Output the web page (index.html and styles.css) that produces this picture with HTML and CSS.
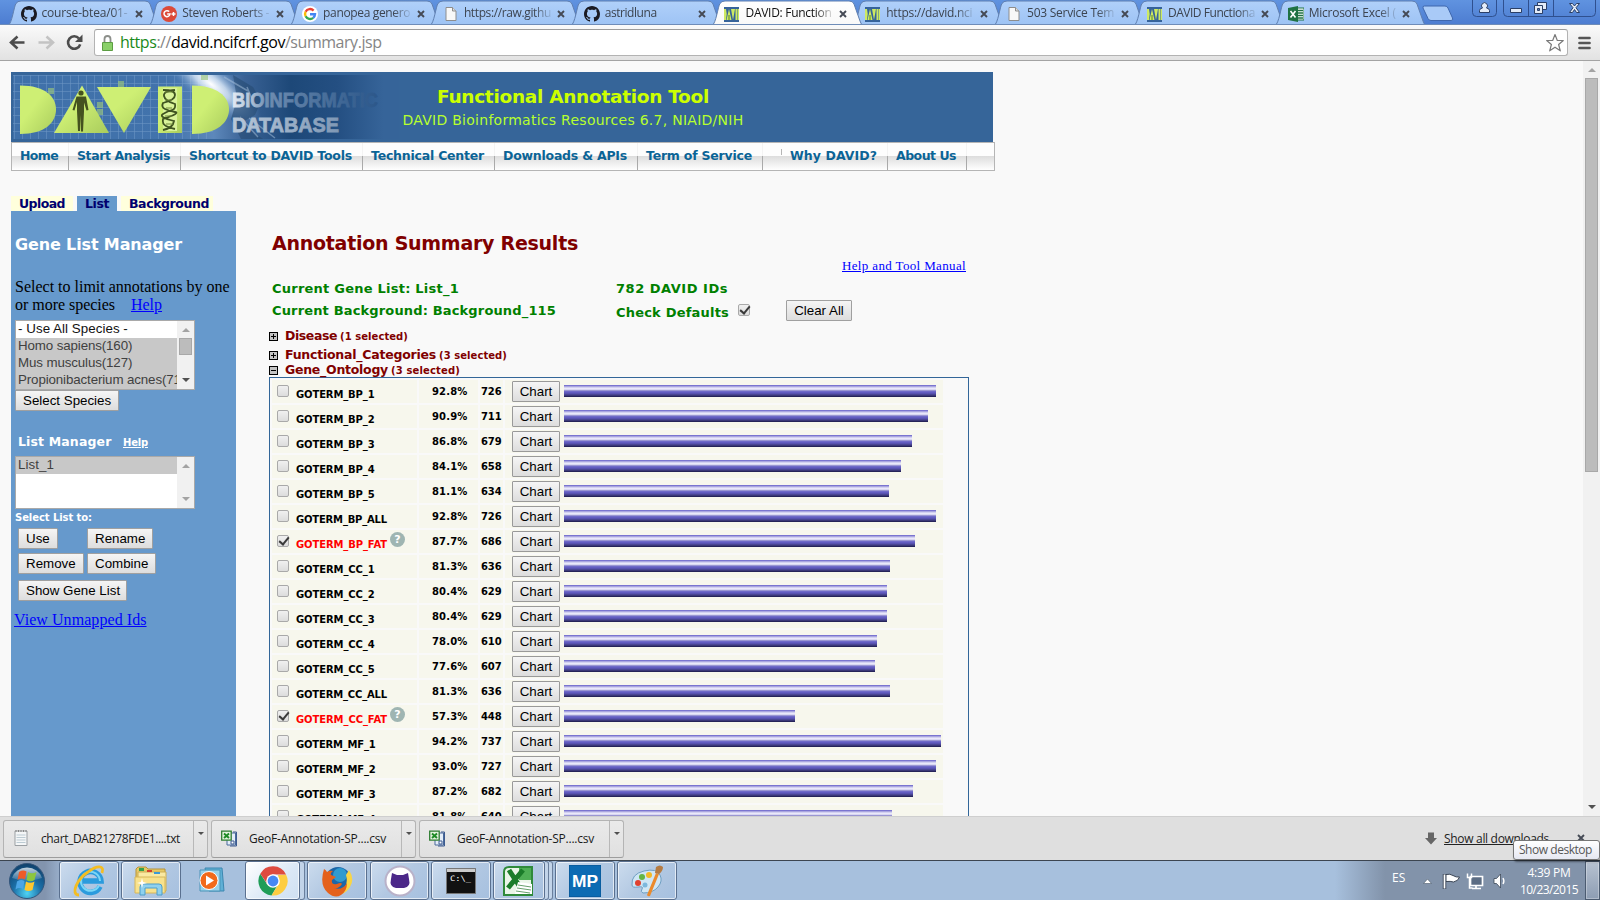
FILE: index.html
```html
<!DOCTYPE html>
<html lang="en">
<head>
<meta charset="utf-8">
<title>DAVID: Functional Annotation Tool</title>
<link rel="stylesheet" href="styles.css">
</head>
<body>
<svg width="0" height="0" class="defs">
  <defs>
    <linearGradient id="tabFill" x1="0" y1="0" x2="0" y2="1"><stop offset="0" stop-color="#b0d0fa"/><stop offset="1" stop-color="#9dc3f4"/></linearGradient>
    <linearGradient id="tabOn" x1="0" y1="0" x2="0" y2="1"><stop offset="0" stop-color="#fff"/><stop offset="1" stop-color="#f8f8f8"/></linearGradient>
    <linearGradient id="limeD" x1="0" y1="0" x2="1" y2="1"><stop offset=".4" stop-color="#ceef74"/><stop offset="1" stop-color="#a9cc5c"/></linearGradient>
    <symbol id="i-github" viewBox="0 0 16 16"><path fill="#1a1a22" d="M8 0C3.58 0 0 3.58 0 8c0 3.54 2.29 6.53 5.47 7.59.4.07.55-.17.55-.38 0-.19-.01-.82-.01-1.49-2.01.37-2.53-.49-2.69-.94-.09-.23-.48-.94-.82-1.13-.28-.15-.68-.52-.01-.53.63-.01 1.08.58 1.23.82.72 1.21 1.87.87 2.33.66.07-.52.28-.87.51-1.07-1.78-.2-3.64-.89-3.64-3.95 0-.87.31-1.59.82-2.15-.08-.2-.36-1.02.08-2.12 0 0 .67-.21 2.2.82.64-.18 1.32-.27 2-.27s1.36.09 2 .27c1.53-1.04 2.2-.82 2.2-.82.44 1.1.16 1.92.08 2.12.51.56.82 1.27.82 2.15 0 3.07-1.87 3.75-3.65 3.95.29.25.54.73.54 1.48 0 1.07-.01 1.93-.01 2.2 0 .21.15.46.55.38A8.01 8.01 0 0 0 16 8c0-4.42-3.58-8-8-8z"/></symbol>
    <symbol id="i-gplus" viewBox="0 0 16 16"><circle cx="8" cy="8" r="8" fill="#db4a39"/><path d="M8.2 5.6A3 3 0 1 0 9 8H6.2M10.5 8h4M12.5 6v4" fill="none" stroke="#fff" stroke-width="1.5"/></symbol>
    <symbol id="i-google" viewBox="0 0 16 16"><circle cx="8" cy="8" r="8" fill="#fff"/><g fill="none" stroke-width="2.4"><path d="M11.6 4.6A5 5 0 0 0 3.6 5.7" stroke="#ea4335"/><path d="M3.6 5.7a5 5 0 0 0 0 4.6" stroke="#fbbc05"/><path d="M3.6 10.3a5 5 0 0 0 7.6 1.5" stroke="#34a853"/><path d="M11.2 11.8A5 5 0 0 0 13 8.2H8" stroke="#4285f4"/></g></symbol>
    <symbol id="i-page" viewBox="0 0 16 16"><path d="M3 1.5h6.5L13 5v9.5H3z" fill="#f8f8f8" stroke="#8d8d8d"/><path d="M9.5 1.5V5H13" fill="#ddd" stroke="#8d8d8d"/></symbol>
    <symbol id="i-david" viewBox="0 0 16 16"><rect y="1" width="15" height="15" fill="#36639a"/><path d="M0 3h2q1.500 5 0 11H0zM2.500 14L5 3l2.500 11zM7 3h4L9 14z" fill="#cdea62"/><path d="M11.500 3H13v11h-1.500zM13.500 3H15v11h-1.500z" fill="#cdea62"/><path d="M4.500 9h1v5h-1z" fill="#55802f"/></symbol>
    <symbol id="i-xl" viewBox="0 0 16 16"><path d="M9 2h7v12H9z" fill="#fff" stroke="#1f7244"/><path d="M10 4.500h5M10 7h5M10 9.500h5M10 12h5" stroke="#1f7244" stroke-width="1.300"/><path d="M0 2l10-2v16L0 14z" fill="#1f7244"/><path d="M2.500 5l5 6.500M7.500 5l-5 6.500" stroke="#fff" stroke-width="1.600"/></symbol>
    <symbol id="i-csv" viewBox="0 0 16 16"><path d="M6 2.500h8.500v12H6z" fill="#e4edf8" stroke="#4a6a9c"/><path d="M12 1.500h3.500v14H9" fill="none" stroke="#3c5b90"/><path d="M.7.700h9.500v9H.7z" fill="#e4f3df" stroke="#2f7d32" stroke-width="1.300"/><path d="M3 3l5 4.500M8 3L3 7.500" stroke="#1d8b25" stroke-width="1.900"/><path d="M10 10.500h3v3h-3z" fill="#fff" stroke="#3c5b90"/></symbol>
    <symbol id="i-note" viewBox="0 0 14 18"><path d="M1 2h12v14.500H1z" fill="#f4f6f7" stroke="#9a9fa3"/><path d="M2 1v2M4.500 1v2M7 1v2M9.500 1v2M12 1v2" stroke="#888"/><path d="M2.500 6h9M2.500 8.500h9M2.500 11h9M2.500 13.500h9" stroke="#bccbd3"/></symbol>
    <symbol id="i-x" viewBox="0 0 8 8"><path d="M1 1l6 6M7 1L1 7" stroke="#454a55" stroke-width="1.900"/></symbol>
  </defs>
</svg>

<div class="strip">
  <div class="tabs" id="tabs"></div>
  <svg class="newtab" width="32" height="17" viewBox="0 0 32 17"><path d="M2.500 1H23q2 0 3 2l4.500 10q1 2.500-1.500 2.500H9q-2 0-3-2L1 3Q.3 1 2.500 1z" fill="#a9caf7" stroke="#3f67ad"/></svg>
  <svg class="winbtns" width="128" height="20" viewBox="0 0 128 20"><g fill="none" stroke="#2f508f"><path d="M3.500 0v12.500q0 4 4 4h16q4 0 4-4V0"/><path d="M34.500 0v12.500q0 4 4 4h84q4 0 4-4V0M59.500 0v16.500M84.500 0v16.500"/></g><g fill="#e4ecf8" stroke="#2b3f66"><path d="M10.500 12.500v-2q0-2 3-2.500a3 3 0 1 1 4 0q3 .5 3 2.500v2z"/><path d="M41.500 8.500h11v4h-11z"/><path d="M68.500 2.500h9v7h-9z"/><path d="M65.500 5.500h8v8h-8z"/><path d="M68.500 8.500h2v2h-2z" fill="#5b7fc4"/><path d="M100.500 3.500h3l2 2.500 2-2.500h3l-3.500 4.200 3.500 4.800h-3l-2-3-2 3h-3l3.500-4.800z"/></g></svg>
</div>

<div class="toolbar">
  <svg class="nav" width="84" height="36" viewBox="0 0 84 36"><g fill="none" stroke-width="2.600"><path d="M25 18.500H12M18 12.500L11.500 18.500l6.500 6" stroke="#4c4c4c"/><path d="M39 18.500h14M47 12.500l6.500 6-6.500 6" stroke="#c3c3c3"/><path d="M79.500 14.500a6.200 6.200 0 1 0 1.200 5.800" stroke="#4c4c4c"/></g><path d="M83 10.500v7.500h-7.500z" fill="#4c4c4c"/></svg>
  <div class="omnibox">
    <svg class="lock" width="13" height="18" viewBox="0 0 13 18"><path d="M3.500 9V5a3 3 0 0 1 6 0v4" fill="none" stroke="#8c8f8a" stroke-width="1.800"/><path d="M1.500 8.500h10v8h-10z" fill="#8ad069" stroke="#5c9d43"/></svg>
    <span class="url"><span data-w="261.500"><b class="sec">https</b>://<b>david.ncifcrf.gov</b>/summary.jsp</span></span>
    <svg class="star" width="20" height="20" viewBox="0 0 20 20"><path d="M10 1.500l2.300 6h6l-4.700 4 1.700 6.300-5.300-3.600-5.300 3.600 1.700-6.300-4.700-4h6z" fill="#fff" stroke="#7a7a7a" stroke-width="1.200" stroke-linejoin="round"/></svg>
  </div>
  <svg class="burger" width="13" height="14" viewBox="0 0 13 14"><path d="M1.500 2h10M1.500 7h10M1.500 12h10" stroke="#555" stroke-width="2.700" stroke-linecap="round"/></svg>
</div>

<div class="view">
  <div class="page">
    <div class="banner">
      <svg class="logo" width="391" height="70" viewBox="0 0 391 70">
        <defs>
          <linearGradient id="bg1" x1="0" x2="1"><stop offset="0" stop-color="#3f70a9"/><stop offset=".4" stop-color="#4273ac"/><stop offset=".52" stop-color="#5d88bb"/><stop offset=".6" stop-color="#3a6295"/><stop offset=".72" stop-color="#1d4878"/><stop offset=".84" stop-color="#244f82"/><stop offset=".96" stop-color="#366499"/></linearGradient>
          <radialGradient id="glow"><stop offset="0" stop-color="#fff"/><stop offset=".35" stop-color="#dbe9f8" stop-opacity=".8"/><stop offset="1" stop-color="#6a97cb" stop-opacity="0"/></radialGradient>
          <linearGradient id="fade" x1="0" x2="1"><stop offset="0" stop-color="#e5ecf4"/><stop offset=".14" stop-color="#a9bdd4"/><stop offset=".24" stop-color="#6f8db1"/><stop offset=".6" stop-color="#4c719c"/><stop offset="1" stop-color="#2c578a"/></linearGradient>
          <linearGradient id="fade2" x1="0" x2="1"><stop offset="0" stop-color="#b9c9da"/><stop offset="1" stop-color="#8098b5"/></linearGradient>
          <pattern id="grid" width="8" height="8" patternUnits="userSpaceOnUse"><path d="M0 3.500h8M3.500 0v8" stroke="#7fa5cf" stroke-opacity=".55"/></pattern>
          <clipPath id="pic"><rect x="2" y="3" width="386" height="64"/></clipPath>
        </defs>
        <g clip-path="url(#pic)">
        <rect x="2" y="3" width="386" height="65" fill="url(#bg1)"/>
        <rect x="2" y="3" width="200" height="65" fill="url(#grid)" opacity=".7"/>
        <ellipse cx="200" cy="12" rx="62" ry="20" transform="rotate(38 200 12)" fill="url(#glow)"/>
        <path d="M222 3l20 12 8 14-6 14-14 8 22 16h-22l-10-20 6-20z" fill="#25486f" opacity=".55"/>
        <path d="M213 5l24 14M236 15l5 12M229 45l18 20M238 46l26 20" stroke="#a9c3de" stroke-width="1.500" opacity=".5"/>
        </g>
        <g fill="#9bc67d" opacity=".65"><rect x="37" y="16" width="6" height="6"/><rect x="107" y="9" width="6" height="6"/><rect x="86" y="30" width="6" height="6"/><rect x="86" y="37" width="6" height="6"/><rect x="190" y="3" width="7" height="5"/></g>
        <g fill="url(#limeD)"><path d="M9 13.500c25 0 36 11 36 24S34 62 9 62z"/><path d="M71 13.500L98 61H43z"/><path d="M86 15h54l-27 46z"/><path d="M147 14.500h24V61h-24z"/><path d="M181 13.500c25 0 37 11 37 24S206 62 181 62z"/></g>
        <path d="M152 16h14v43h-14z" fill="#d9f39a"/>
        <g fill="#45521f"><circle cx="70" cy="21" r="2.600"/><path d="M65.500 24.500h9.500l2.500 13.500-2 .5-2.500-8v9L72 59.500h-2L70 43l-1 16h-2L66 39v-9l-2.500 8.500-2-.5z"/></g>
        <path d="M152 18q12 0 12 5t-12 8q-2 4 2 6t10 3-12 7q-1 5 3 7t9 3M164 18q-12 1-11 6t11 8q1 5-3 6t-9 4 11 7q-1 7-11 9" fill="none" stroke="#3f5420" stroke-width="1.800"/>
        <path d="M154 20h8M154 28h7M155 36h6M154 44h7M155 52h7" stroke="#71893b"/>
        <text x="221" y="35" class="lg" fill="url(#fade)" stroke="url(#fade)" stroke-width=".8" textLength="146" lengthAdjust="spacingAndGlyphs">BIOINFORMATIC</text>
        <text x="221" y="60" class="lg" fill="url(#fade2)" stroke="url(#fade2)" stroke-width=".8" textLength="107" lengthAdjust="spacingAndGlyphs">DATABASE</text>
      </svg>
      <div class="heads">
        <h1><span data-w="272">Functional Annotation Tool</span></h1>
        <p><span data-w="341">DAVID Bioinformatics Resources 6.7, NIAID/NIH</span></p>
      </div>
    </div>
    <div class="menu" id="menu"></div>

    <div class="columns">
      <div class="side">
        <div class="stabs"><span class="st st1"><span data-w="46">Upload</span></span><span class="st st2"><span data-w="24">List</span></span><span class="st st3"><span data-w="80">Background</span></span></div>
        <div class="panel">
          <h2><span data-w="167">Gene List Manager</span></h2>
          <p class="serif"><span data-w="214.500">Select to limit annotations by one</span><br><span data-w="100">or more species</span><a class="hlp" data-w="31">Help</a></p>
          <div class="select sel1">
            <div class="opts"><div class="o">- Use All Species -</div><div class="o on">Homo sapiens(160)</div><div class="o on">Mus musculus(127)</div><div class="o on">Propionibacterium acnes(71)</div></div>
            <div class="sb"><i class="up dim"></i><i class="knob"></i><i class="grow"></i><i class="dn"></i></div>
          </div>
          <button class="b w104">Select Species</button>
          <h3><span data-w="93.500">List Manager</span><a data-w="25">Help</a></h3>
          <div class="select sel2">
            <div class="opts"><div class="o on">List_1</div></div>
            <div class="sb"><i class="up dim"></i><i class="grow"></i><i class="dn dim"></i></div>
          </div>
          <h4><span data-w="77">Select List to:</span></h4>
          <div class="btns"><button class="b">Use</button><button class="b">Rename</button><button class="b">Remove</button><button class="b">Combine</button></div>
          <button class="b sg">Show Gene List</button>
          <p class="unm"><a data-w="132.500">View Unmapped Ids</a></p>
        </div>
      </div>

      <div class="main">
        <h2 class="title"><span data-w="306">Annotation Summary Results</span></h2>
        <p class="manual"><a data-w="124">Help and Tool Manual</a></p>
        <div class="info">
          <div class="left"><p><span data-w="187">Current Gene List: List_1</span></p><p><span data-w="284">Current Background: Background_115</span></p></div>
          <div class="right"><p><span data-w="112">782 DAVID IDs</span></p>
            <div class="defs-row"><span class="cd"><span data-w="113">Check Defaults</span></span><span class="cb on"></span><button class="b clr">Clear All</button></div></div>
        </div>
        <div class="cat c1"><i class="box plus"></i><b data-w="52">Disease</b><small data-w="68">(1 selected)</small></div>
        <div class="cat c2"><i class="box plus"></i><b data-w="151">Functional_Categories</b><small data-w="68">(3 selected)</small></div>
        <div class="cat c3"><i class="box"></i><b data-w="103">Gene_Ontology</b><small data-w="69">(3 selected)</small></div>
        <div class="table" id="rows"></div>
      </div>
    </div>
  </div>
  <div class="scroll"><i class="up dim"></i><i class="thumb"></i><i class="grow"></i><i class="dn"></i></div>
</div>

<div class="shelf">
  <div class="dl"><svg width="14" height="18"><use href="#i-note"/></svg><span class="dt dt1"><span data-w="139">chart_DAB21278FDE1....txt</span></span><span class="dd"><i class="dn"></i></span></div>
  <div class="dl csv"><svg width="16" height="17"><use href="#i-csv"/></svg><span class="dt"><span data-w="137">GeoF-Annotation-SP....csv</span></span><span class="dd"><i class="dn"></i></span></div>
  <div class="dl csv"><svg width="16" height="17"><use href="#i-csv"/></svg><span class="dt"><span data-w="137">GeoF-Annotation-SP....csv</span></span><span class="dd"><i class="dn"></i></span></div>
  <div class="all"><svg width="12" height="13" viewBox="0 0 12 13"><path d="M3 .5h6V6h3l-6 6.500L0 6h3z" fill="#666"/></svg><a data-w="105">Show all downloads</a><svg class="sx" width="8" height="8"><use href="#i-x"/></svg></div>
  <div class="tip"><span data-w="73">Show desktop</span></div>
</div>

<div class="taskbar">
  <div class="tk start"><svg width="38" height="38" viewBox="0 0 38 38"><defs><radialGradient id="orb" cx=".5" cy=".85" r=".9"><stop offset="0" stop-color="#4fd3f4"/><stop offset=".45" stop-color="#1b6ea6"/><stop offset="1" stop-color="#0d3a63"/></radialGradient><linearGradient id="shine" x1="0" y1="0" x2="0" y2="1"><stop offset="0" stop-color="#fff" stop-opacity=".75"/><stop offset="1" stop-color="#fff" stop-opacity=".1"/></linearGradient></defs><circle cx="19" cy="19" r="17.500" fill="url(#orb)" stroke="#33557b"/><path d="M4 16a15.500 14 0 0 1 30 0q-15 5-30 0z" fill="url(#shine)"/><path d="M11 10q4-2.500 7.500-.5L17 17.500q-4-2-7.500.5z" fill="#ee5b28"/><path d="M20 10q4 2.500 8.500 0L26.500 18q-4 2.500-8 0z" fill="#8cc63e"/><path d="M9 19.500q4-2.500 7.500-.5L15 27q-4-2-7.500.5z" fill="#4ba5e6"/><path d="M18 19.500q4 2.500 8.500 0L24.500 28q-4 2-8 0z" fill="#fdc72f"/></svg></div>
  <div class="tk btn w60"><svg width="34" height="34" viewBox="0 0 34 34"><path d="M28 22.500A10.500 10.500 0 1 1 29 17H11" fill="none" stroke="#2b9bdd" stroke-width="5.500"/><path d="M27 21.500A9.500 9.500 0 1 1 28 17" fill="none" stroke="#7bd6f6" stroke-width="2"/><path d="M7 31C-2 31 5 15 16 8 25 1 33 1 30 9" fill="none" stroke="#f4bd22" stroke-width="2.800"/></svg></div>
  <div class="tk btn w60 g2"><svg width="34" height="34" viewBox="0 0 34 34"><path d="M2 5l2-2h8l2 2h17v23H2z" fill="#e7c964" stroke="#b6933a"/><path d="M4 8h28v19H4z" fill="#fae9a2" stroke="#cdae55"/><path d="M5 4h5v3H5z" fill="#35a14a"/><path d="M13 6h5v2h-5z" fill="#d5402b"/><path d="M20 8h6v2h-6z" fill="#3b9ad6"/><path d="M1 13h30v16H1z" fill="#f8e28d" stroke="#d6b65b"/><path d="M6 31V23q0-3 3-3h16q3 0 3 3v8h-5v-7H11v7z" fill="#8fd1ee" stroke="#4d9ecb"/><path d="M8 14l1 4 4 1-4 1-1 4-1-4-4-1 4-1z" fill="#fff"/></svg></div>
  <div class="tk wmp"><svg width="30" height="28" viewBox="0 0 30 28"><path d="M8 1h17l2 23H12z" fill="#5fb0d6" stroke="#3c87b0"/><path d="M3 3h20v21H3z" fill="#9ad2ea" stroke="#4a94b8"/><circle cx="12" cy="13.500" r="9" fill="#f26a1b" stroke="#fff"/><path d="M9 8.500l8 5-8 5z" fill="#fff"/></svg></div>
  <div class="tk btn bright w55"><svg width="30" height="30" viewBox="0 0 30 30"><path d="M2.300 7.800A14.500 14.500 0 0 0 13.500 29.500L20 18.500 15 15 9 18z" fill="#1f9d58"/><path d="M28 8.500A14.500 14.500 0 0 1 13.500 29.500L20.500 18 20 9z" fill="#fdcd41"/><path d="M28 8.500H14l-5 9L2.300 7.800A14.500 14.500 0 0 1 28 8.500z" fill="#de4b3f"/><circle cx="15" cy="15" r="6.800" fill="#fff"/><circle cx="15" cy="15" r="5.400" fill="#4688f4"/></svg></div><div class="stack"></div>
  <div class="tk btn w60 g2"><svg width="32" height="32" viewBox="0 0 32 32"><circle cx="17" cy="15" r="13" fill="#1c66a8"/><circle cx="19" cy="10" r="7" fill="#2f9bd0"/><path d="M28 5q6 9 1 17T14 31q7-4 10-9t1-12z" fill="#f9d545"/><path d="M3 4q2 1 3 3 3-2 6-1-3 2-2 4l5 2-4 3q-1 5 5 4 4-2 5 0-3 5-8 4 8 3 13-5 0 8-6 12T7 28Q-2 20 3 4z" fill="#e4611c"/></svg></div>
  <div class="tk btn w59 g3"><svg width="32" height="32" viewBox="0 0 32 32"><circle cx="16" cy="16" r="14.500" fill="#fff" stroke="#b9b2c9" stroke-width="2"/><path d="M8 8l5 2h6l5-2 1 6q2 8-5 9H12q-7-1-5-9z" fill="#4c2889"/></svg></div>
  <div class="tk btn w60 g2"><svg width="30" height="26" viewBox="0 0 30 26"><path d="M.5.500h29v25H.5z" fill="#111" stroke="#777"/><path d="M1 1h28v3H1z" fill="#ccc"/><text x="4" y="13" class="cmd" textLength="21" lengthAdjust="spacingAndGlyphs">C:\_</text></svg></div>
  <div class="tk btn w52 g2 xl"><svg width="30" height="30" viewBox="0 0 30 30"><path d="M1 6q0-5 5-5h23v28H1z" fill="#eaf5e8" stroke="#2f8a3a" stroke-width="2"/><path d="M16 2h12v12H16z" fill="#4eae55"/><path d="M6 4l13 20M20 4L5 22" stroke="#1b7c2a" stroke-width="5"/><path d="M15 16l14 2v10H12z" fill="#fff"/><path d="M15 19l13 2M14 22l14 2M13 25l14 2" stroke="#68a06d"/></svg></div><div class="stack s2"></div><div class="stack s2"></div>
  <div class="tk btn w60 g2"><svg width="32" height="32" viewBox="0 0 32 32"><path d="M0 0h32v32H0z" fill="#0c6bb3" stroke="#06518c"/><text x="3" y="22" class="mp" textLength="26" lengthAdjust="spacingAndGlyphs">MP</text></svg></div>
  <div class="tk btn w60 g2"><svg width="34" height="32" viewBox="0 0 34 32"><path d="M2 20Q1 9 14 6t16 4q3 6-2 12T13 28q-3-1-1-4t-4-2-6-2z" fill="#cfe6f5" stroke="#6f9fc2"/><circle cx="8" cy="18" r="3" fill="#e0412f"/><circle cx="12" cy="12" r="3" fill="#63b545"/><circle cx="19" cy="10" r="3" fill="#f3b926"/><circle cx="15" cy="20" r="2.500" fill="#7db8dd"/><path d="M17 30l9-22 3 1-9 22q-2 1-3-1z" fill="#ea8a2c"/><path d="M25 8l1-6q4-3 7 0 0 4-4 7z" fill="#b57b42"/></svg></div>
  <div class="tray">
    <span class="es">ES</span>
    <svg width="84" height="20" viewBox="0 0 84 20"><path d="M.5 12.500h8L4.500 8z" fill="#fff" stroke="#4c5a6c" stroke-width=".6"/><path d="M21.500 3v15" stroke="#3b4656" stroke-width="3.500"/><path d="M23 3.500q4-1 7 1t6.500 1.500q-1 4-6 5-3-1-7.500-.5z" fill="#fff" stroke="#3b4656"/><path d="M21.500 3.500v14" stroke="#fff" stroke-width="1.700"/><path d="M47.500 5.500h12v9h-12z" fill="#5c6d84" stroke="#fff" stroke-width="1.700"/><path d="M53 15v2M49 17.500h9" stroke="#fff" stroke-width="1.700"/><path d="M44.500 2.500v4h4v-4M46.500 7v10h3" fill="none" stroke="#fff" stroke-width="1.500"/><path d="M71 7.500h2.500l4-4.500v14l-4-4.500H71z" fill="#fff" stroke="#3b4656" stroke-width=".8"/><path d="M80 7q1.800 3 0 6" stroke="#fff" fill="none" stroke-width="1.400"/></svg>
    <div class="clock"><span data-w="43">4:39 PM</span><br><span data-w="58">10/23/2015</span></div>
    <div class="peek"></div>
  </div>
</div>
<script src="app.js"></script>
</body>
</html>
```

FILE: styles.css
```css
* { box-sizing: border-box; }
html, body { margin: 0; padding: 0; }
body { width: 1600px; height: 900px; overflow: hidden; background: #f9f9f9; font-family: "DejaVu Sans", Verdana, sans-serif; color: #000; display: flex; flex-direction: column; }
h1, h2, h3, h4, p { margin: 0; }
svg { display: block; flex: none; }
i { display: block; font-style: normal; }
span[data-w], a[data-w], b[data-w], small[data-w] { white-space: nowrap; }
.defs { position: absolute; }
.grow { flex: 1; }

/* browser tabs */
.strip { height: 25px; flex: none; display: flex; background: linear-gradient(#6093e0, #4d7dd1); border-bottom: 1px solid #6e8cb8; overflow: hidden; }
.tabs { display: flex; padding-left: 8px; width: 1422px; flex: none; }
.tab { width: 140.8px; height: 25px; flex: none; position: relative; display: flex; align-items: center; padding: 2px 0 0 12.500px; }
.tab.on { z-index: 2; }
.tab .shape { position: absolute; left: 0; top: 0; }
.tab svg, .tab .tt { position: relative; }
.tab .tt { margin-left: 5px; width: 87px; overflow: hidden; font: 12px/20px "Open Sans", "Noto Sans", sans-serif; color: #3c4450; margin-top: -1px; -webkit-mask-image: linear-gradient(90deg, #000 70px, rgba(0,0,0,.15) 87px); mask-image: linear-gradient(90deg, #000 70px, rgba(0,0,0,.15) 87px); }
.tab.on .tt { color: #111; }
.tab .close { margin-left: 6.500px; }
.newtab { margin-top: 5px; margin-left: 0; }
.winbtns { margin-left: 15px; }

.toolbar { height: 36px; flex: none; display: flex; align-items: flex-start; background: linear-gradient(#fafafa, #e2e2e2); border-bottom: 1px solid #a3a3a3; }
.nav { margin: -1px 10px 0 -1px; width: 85px; }
.omnibox { width: 1474px; height: 27px; margin-top: 4px; border: 1px solid #b3b3b3; border-top-color: #9c9c9c; border-radius: 3px; background: #fff; display: flex; align-items: center; padding-left: 6px; }
.url { margin-left: 6px; font: 16px/25px "Open Sans", "Noto Sans", sans-serif; color: #858585; flex: 1; }
.url b { font-weight: 400; color: #000; }
.url b.sec { color: #1a8a1a; }
.star { margin-right: 2px; }
.burger { margin: 11px 0 0 10px; }

.view { height: 755px; flex: none; display: flex; overflow: hidden; }
.page { width: 1583px; padding: 11px 0 0 11px; }
.scroll { width: 17px; background: #f1f1f1; display: flex; flex-direction: column; align-items: center; padding: 7px 0 7px; }
.up, .dn { width: 0; height: 0; border: 4px solid transparent; flex: none; }
.up { border-top: 0; border-bottom-color: #505050; }
.dn { border-bottom: 0; border-top-color: #505050; }
.up.dim { border-bottom-color: #a3a3a3; }
.dn.dim { border-top-color: #a3a3a3; }
.thumb { width: 13px; height: 394px; margin-top: 6px; background: #bcbcbc; border: 1px solid #a8a8a8; }

.banner { width: 982px; height: 70px; background: #366599; display: flex; }
.heads { width: 342px; text-align: center; white-space: nowrap; }
.heads h1 { font-size: 18.500px; line-height: 24px; margin-top: 13px; color: #cf0; }
.heads p { font-size: 14px; line-height: 20px; margin-top: 1px; color: #b7ff2e; }
.lg { font: bold 20px "Liberation Sans", Arial, sans-serif; }

.menu { width: 984px; height: 29px; border: 1px solid #b5b5b5; display: flex; background: linear-gradient(#fdfdfd 0 13px, #dcdcdc 13px, #fff 27px); }
.menu .m { flex: none; text-align: center; padding-right: 2px; font-size: 12.500px; font-weight: 700; line-height: 26px; color: #0b6496; border-right: 1px solid #aaa; border-image: linear-gradient(#f3f3f3 13px, #aaa 13px) 1; white-space: nowrap; }
.menu .tick { width: 1px; height: 6px; margin: 6px 0 0 18px; background: #b5b5b5; display: block; }

.columns { display: flex; margin-top: 25px; }
.side { width: 225px; flex: none; }
.stabs { display: flex; height: 15px; }
.st { background: #ffffdc; color: #00006e; font-size: 12.500px; font-weight: 700; line-height: 15px; padding-left: 8px; margin-right: 4px; }
.st1 { width: 62px; } .st2 { width: 40px; background: #69c; } .st3 { width: 92px; }
.panel { height: 640px; background: #69c; padding: 22px 0 0 4px; }
.panel h2 { font-size: 16px; line-height: 24px; color: #fff; }
.serif { font: 16px/18px "Liberation Serif", "Times New Roman", serif; margin-top: 21px; }
.hlp { margin-left: 16px; }
.panel a, .manual a { color: #00f; text-decoration: underline; }
.select { width: 180px; background: #fff; border: 1px solid #a9a9a9; display: flex; }
.sel1 { height: 70px; margin-top: 6px; }
.sel2 { height: 53px; margin-top: 3px; }
.opts { width: 161px; overflow: hidden; flex: none; }
.o { height: 17px; padding-left: 2px; font: 13.333px/16px "Liberation Sans", Arial, sans-serif; letter-spacing: -.12px; white-space: nowrap; color: #111; }
.o:first-child { letter-spacing: .05px; }
.o.on { background: #c8c8c8; color: #404040; }
.sb { width: 17px; background: #f1f1f1; display: flex; flex-direction: column; align-items: center; padding: 7px 0; }
.knob { width: 13px; height: 17px; margin-top: 6px; background: #bcbcbc; border: 1px solid #a8a8a8; }
.b { height: 21px; padding: 0 7px; border: 1px solid #a0a0a0; border-radius: 1px; background: linear-gradient(#f5f5f5, #ddd); font: 13.333px/18px "Liberation Sans", Arial, sans-serif; color: #000; white-space: nowrap; display: block; text-align: center; }
.w104 { width: 104px; }
.panel h3 { font-size: 12.500px; line-height: 20px; margin: 21px 0 0 3px; color: #fff; }
.panel h3 a { font-size: 10px; color: #fff; margin-left: 11.500px; }
.panel h4 { font-size: 10px; line-height: 15px; color: #fff; margin-top: 1px; }
.btns { display: grid; grid-template-columns: 65px 68px; gap: 4px; margin: 3px 0 0 3px; justify-items: start; }
.sg { margin: 6px 0 0 3px; width: 109px; }
.unm { font: 16px/18px "Liberation Serif", "Times New Roman", serif; margin: 10px 0 0 -1px; }

.main { width: 700px; margin-left: 33px; flex: none; }
.title { font-size: 19px; line-height: 24px; margin: 35px 0 0 3px; color: #800000; }
.manual { font: 13px/16px "Liberation Serif", "Times New Roman", serif; text-align: right; padding-right: 3px; margin-top: 3px; }
.info { display: flex; padding-left: 3px; color: #008000; font-size: 13px; font-weight: 700; margin-top: 4px; height: 52px; }
.info .left { width: 344px; }
.info p { line-height: 22px; }
.defs-row { display: flex; align-items: flex-start; }
.cd { line-height: 25px; width: 122px; }
.cb { width: 12px; height: 12px; flex: none; border: 1px solid #a9a9a9; border-radius: 2px; background: linear-gradient(#f0f0f0, #dcdcdc); position: relative; }
.cb.on::after { content: ""; position: absolute; left: 3px; top: -1px; width: 4px; height: 8px; border: solid #3a3a3a; border-width: 0 2.500px 2.500px 0; transform: rotate(40deg); }
.defs-row .cb { margin-top: 4px; }
.clr { margin: 0 0 0 36px; width: 66px; }
.cat { display: flex; align-items: center; color: #800000; font-weight: 700; height: 16px; }
.cat b { font-size: 12.500px; line-height: 16px; margin-left: 7px; }
.cat small { font-size: 10px; line-height: 18px; padding-top: 2px; margin-left: 3px; }
.c1 { margin-top: -2px; } .c2 { margin-top: 3px; } .c3 { margin-top: -1px; }
.box { width: 9px; height: 9px; border: 1px solid #000; background: linear-gradient(#000, #000) center/5px 1px no-repeat, #c4c4c4; }
.box.plus { background: linear-gradient(#000, #000) center/5px 1px no-repeat, linear-gradient(#000, #000) center/1px 5px no-repeat, #c4c4c4; }
.table { border: 1px solid #369; margin-top: -1px; padding: 2px; height: 460px; display: flex; flex-direction: column; gap: 2px; }
.row { display: flex; gap: 2px; height: 23px; flex: none; }
.row > div { background: #f7f7ed; display: flex; font-size: 10px; font-weight: 700; }
.row > .c-n { width: 145px; padding: 5px 0 0 5px; }
.c-n .lb { margin-left: 7px; line-height: 20px; }
.c-n .lb.hot { color: #f00; }
.q { width: 15px; height: 15px; border-radius: 50%; background: #9fb5b2; color: #fff; font-size: 11px; line-height: 15px; text-align: center; margin: -3px 0 0 3px; }
.c-p { width: 59px; padding-left: 13px; line-height: 23px; }
.c-c { width: 23px; padding-left: 1px; line-height: 23px; }
.row > .c-b { width: 438px; padding: 1px 0 0 7px; }
.c-b .b { width: 48px; border-color: #999; padding: 0 6px; }
.bar { height: 12px; margin: 4px 0 0 4px; background: linear-gradient(#7a74d0 0 1px, #a9a5e0 1px 2px, #d2d0f0 2px 3px, #e9e8fa 3px 4px, #d8d6f2 4px 5px, #9a96d2 5px 6px, #6f6ac8 6px 7px, #625cc0 7px 8px, #5853b0 8px 9px, #4a4694 9px 10px, #3a3778 10px 11px, #26245a 11px); }

.shelf { height: 44px; flex: none; background: #dfdfdf; border-top: 1px solid #cfcfcf; display: flex; padding: 3px 0 0 3px; gap: 3px; position: relative; }
.dl { width: 205px; height: 38px; border: 1px solid #b4b4b4; border-bottom-color: #9d9d9d; border-radius: 3px; background: linear-gradient(#eaeaea, #e0e0e0); display: flex; align-items: center; padding-left: 10px; }
.dl svg { margin-bottom: 2px; }
.dl.csv { padding-left: 9px; }
.dt { font: 12px/36px "Open Sans", "Noto Sans", sans-serif; color: #1a1a1a; margin-left: 12px; flex: 1; white-space: nowrap; }
.dt1 { margin-left: 13px; }
.dd { width: 14px; height: 36px; border-left: 1px solid #b8b8b8; display: flex; justify-content: center; padding-top: 11px; }
.dd .dn { border-width: 3px; border-bottom: 0; }
.all { margin-left: auto; display: flex; align-items: center; padding-right: 15px; height: 36px; font: 12px/18px "Open Sans", "Noto Sans", sans-serif; }
.all a { margin: 1px 28px 0 7px; text-decoration: underline; color: #222; }
.tip { position: absolute; right: 0; top: 23px; width: 87px; height: 20px; border: 1px solid #767676; border-radius: 3px; background: linear-gradient(#fff, #e6e8f2); font: 12px/18px "Open Sans", "Noto Sans", sans-serif; color: #575757; padding-left: 5px; z-index: 3; box-shadow: 1px 2px 2px rgba(0,0,0,.4); }

.taskbar { height: 40px; flex: none; border-top: 1px solid #3c4550; background: linear-gradient(90deg, #8294ae 0, #8294ae 45px, #a7c0dd 70px, #a7c0dd 1335px, #8293aa 1385px); display: flex; }
.tk { height: 39px; display: flex; align-items: center; justify-content: center; flex: none; }
.start { width: 54px; }
.btn { border: 1px solid #5a708f; border-radius: 3px; background: linear-gradient(135deg, #ccdcee, #b2c8e2 50%, #a6c0df); box-shadow: inset 0 0 0 1px rgba(255,255,255,.65); }
.start + .btn { margin-left: 5px; }
.bright { background: linear-gradient(135deg, #fff, #dbe8f6 60%, #cfe0f2); }
.w60 { width: 60px; } .w59 { width: 59px; } .w55 { width: 55px; } .w52 { width: 52px; }
.g2 { margin-left: 2px; } .g3 { margin-left: 3px; }
.xl { padding-right: 3px; }
.wmp { width: 64px; padding-right: 3px; }
.stack { width: 5px; border: 1px solid #6a7f9c; border-left: 0; border-radius: 0 3px 3px 0; background: #c2d4e9; flex: none; }
.s2 { width: 4px; }
.cmd { font: 7.500px "DejaVu Sans Mono", monospace; fill: #fff; }
.mp { font: bold 17px "Liberation Sans", Arial, sans-serif; fill: #fff; }
.tray { margin-left: auto; display: flex; color: #fff; font: 12px/17px "Open Sans", "Noto Sans", sans-serif; }
.es { width: 29px; padding-top: 8px; }
.tray > svg { margin-top: 10px; margin-left: 2px; }
.clock { width: 60px; text-align: center; margin: 3px 6px 0 12px; white-space: nowrap; }
.peek { width: 15px; height: 39px; border: 1px solid #4b5b70; background: linear-gradient(#b7c2d1, #8d9db3); box-shadow: inset 0 0 0 1px rgba(255,255,255,.3); }
```

FILE: app.js
```js
const tabs = [
  ['github', 'course-btea/01-', 86], ['gplus', 'Steven Roberts -', 87], ['google', 'panopea genero', 87],
  ['page', 'https://raw.githu', 87], ['github', 'astridluna', 52], ['david', 'DAVID: Function', 86],
  ['david', 'https://david.nci', 86], ['page', '503 Service Tem', 87], ['david', 'DAVID Functiona', 87], ['xl', 'Microsoft Excel (', 87]
];
document.getElementById('tabs').innerHTML = tabs.map(([icon, text, w], i) => {
  const on = i === 5;
  return `<div class="tab${on ? ' on' : ''}"><svg class="shape" width="151" height="25"><path d="M0 25.500C4 24 6 6 8 3.500Q9.500 1 13 1H137Q141 1 142 4L148 21Q149.500 25.500 151 25.500Z" fill="url(#${on ? 'tabOn' : 'tabFill'})" stroke="#5f7fb0"/></svg>` +
    `<svg width="16" height="16"><use href="#i-${icon}"/></svg><span class="tt"><span data-w="${w}">${text}</span></span>` +
    `<svg class="close" width="8" height="8"><use href="#i-x"/></svg></div>`;
}).join('');

const menu = [['Home', 57, 38], ['Start Analysis', 112, 93], ['Shortcut to DAVID Tools', 182, 163], ['Technical Center', 132, 113],
  ['Downloads &amp; APIs', 143, 124], ['Term of Service', 125, 106], [null], ['Why DAVID?', 106, 87], ['About Us', 79, 60]];
document.getElementById('menu').innerHTML = menu.map(([t, w, tw]) =>
  t ? `<div class="m" style="width:${w}px"><span data-w="${tw}">${t}</span></div>` : '<i class="tick"></i>').join('');

const rows = [['BP_1', 92.8, 726, 372], ['BP_2', 90.9, 711, 364], ['BP_3', 86.8, 679, 348], ['BP_4', 84.1, 658, 337], ['BP_5', 81.1, 634, 325],
  ['BP_ALL', 92.8, 726, 372], ['BP_FAT', 87.7, 686, 351, 1], ['CC_1', 81.3, 636, 326], ['CC_2', 80.4, 629, 323], ['CC_3', 80.4, 629, 323],
  ['CC_4', 78, 610, 313], ['CC_5', 77.6, 607, 311], ['CC_ALL', 81.3, 636, 326], ['CC_FAT', 57.3, 448, 231, 1], ['MF_1', 94.2, 737, 377],
  ['MF_2', 93, 727, 372], ['MF_3', 87.2, 682, 349], ['MF_4', 81.8, 640, 328]];
document.getElementById('rows').innerHTML = rows.map(([n, p, c, w, hot]) =>
  `<div class="row"><div class="c-n"><span class="cb${hot ? ' on' : ''}"></span><span class="lb${hot ? ' hot' : ''}"><span data-w="${n.length > 4 ? 91 : n[0] === 'M' ? 79.5 : 78.5}">GOTERM_${n}</span></span>${hot ? '<span class="q">?</span>' : ''}</div>` +
  `<div class="c-p"><span data-w="35.5">${p.toFixed(1)}%</span></div><div class="c-c"><span data-w="20.5">${c}</span></div>` +
  `<div class="c-b"><button class="b">Chart</button><div class="bar" style="width:${w}px"></div></div></div>`).join('');

/* letter-space each label so it fills its slot exactly */
document.querySelectorAll('[data-w]').forEach(el => {
  const gap = (el.dataset.w - el.getBoundingClientRect().width) / el.textContent.length;
  el.style.letterSpacing = gap.toFixed(3) + 'px';
});
```
